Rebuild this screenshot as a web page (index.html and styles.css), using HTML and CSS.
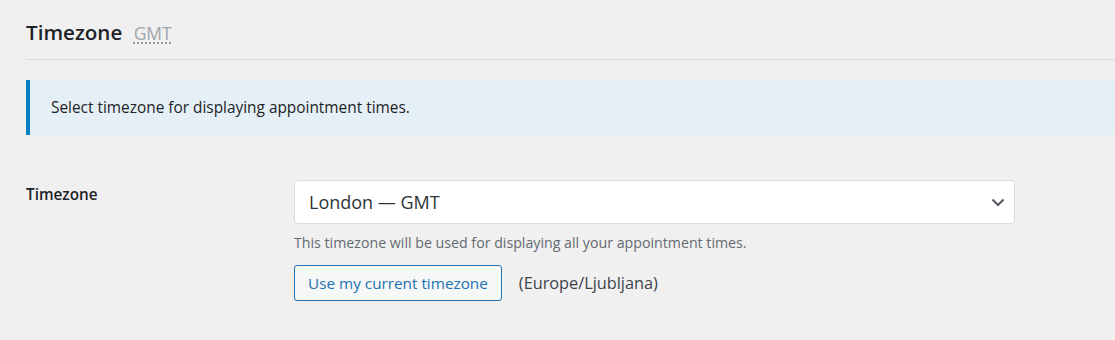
FILE: index.html
```html
<!DOCTYPE html>
<html lang="en">
<head>
<meta charset="utf-8">
<title>Timezone</title>
<link rel="stylesheet" href="styles.css">
</head>
<body>
<div class="wrap">
  <div class="page-header">
    <h1 class="title">Timezone <abbr class="tz-abbr" title="Greenwich Mean Time">GMT</abbr></h1>
  </div>
  <div class="notice">
    <p>Select timezone for displaying appointment times.</p>
  </div>
  <div class="form-row">
    <div class="form-label">Timezone</div>
    <div class="form-field">
      <div class="select">
        <span class="select-value">London — GMT</span>
        <svg class="chevron" width="14" height="9" viewBox="0 0 14 9" aria-hidden="true"><path d="M1.5 1.5 L7 7 L12.5 1.5" fill="none" stroke="#50575e" stroke-width="2"/></svg>
      </div>
      <p class="description">This timezone will be used for displaying all your appointment times.</p>
      <div class="actions">
        <button class="button" type="button">Use my current timezone</button>
        <span class="current-tz">(Europe/Ljubljana)</span>
      </div>
    </div>
  </div>
</div>
</body>
</html>
```
FILE: styles.css
```css
* { box-sizing: border-box; }
html, body { margin: 0; padding: 0; }
body {
  background: #f0f0f1;
  font-family: "Open Sans", "Noto Sans", "Liberation Sans", sans-serif;
  color: #1d2327;
}
.wrap { padding-left: 26px; }
.page-header {
  padding-top: 18px;
  padding-bottom: 12px;
  border-bottom: 1px solid #dcdcde;
}
.title {
  margin: 0;
  font-size: 20.6px;
  line-height: 28px;
  font-weight: 600;
  color: #1d2327;
}
.tz-abbr {
  margin-left: 6px;
  font-size: 17.5px;
  font-weight: 400;
  color: #a0a5aa;
  text-decoration: underline dotted #8c8f94;
  text-underline-offset: 3px;
}
.notice {
  margin-top: 20px;
  background: #e5f0f6;
  border-left: 4px solid #0581c4;
  padding: 17px 21px;
}
.notice p {
  margin: 0;
  font-size: 15.4px;
  line-height: 21px;
  color: #1d2327;
}
.form-row {
  display: grid;
  grid-template-columns: 268px 721px;
  margin-top: 45px;
}
.form-label {
  padding-top: 4px;
  font-size: 15.3px;
  line-height: 20px;
  font-weight: 600;
}
.select {
  height: 44px;
  background: #fff;
  border: 1px solid #dcdcde;
  border-radius: 4px;
  display: flex;
  align-items: center;
  justify-content: space-between;
  padding: 0 9px 0 14px;
}
.select-value {
  font-size: 18px;
  color: #2c3338;
}
.chevron { display: block; }
.description {
  margin: 10px 0 0;
  font-size: 14.2px;
  line-height: 18px;
  color: #646970;
}
.actions {
  margin-top: 13px;
  display: flex;
  align-items: center;
}
.button {
  height: 36px;
  padding: 0 13px;
  font-family: inherit;
  font-size: 15.3px;
  color: #2271b1;
  background: #f6f7f7;
  border: 1px solid #2271b1;
  border-radius: 3px;
}
.current-tz {
  margin-left: 17px;
  font-size: 16.3px;
  color: #3c434a;
}
```
